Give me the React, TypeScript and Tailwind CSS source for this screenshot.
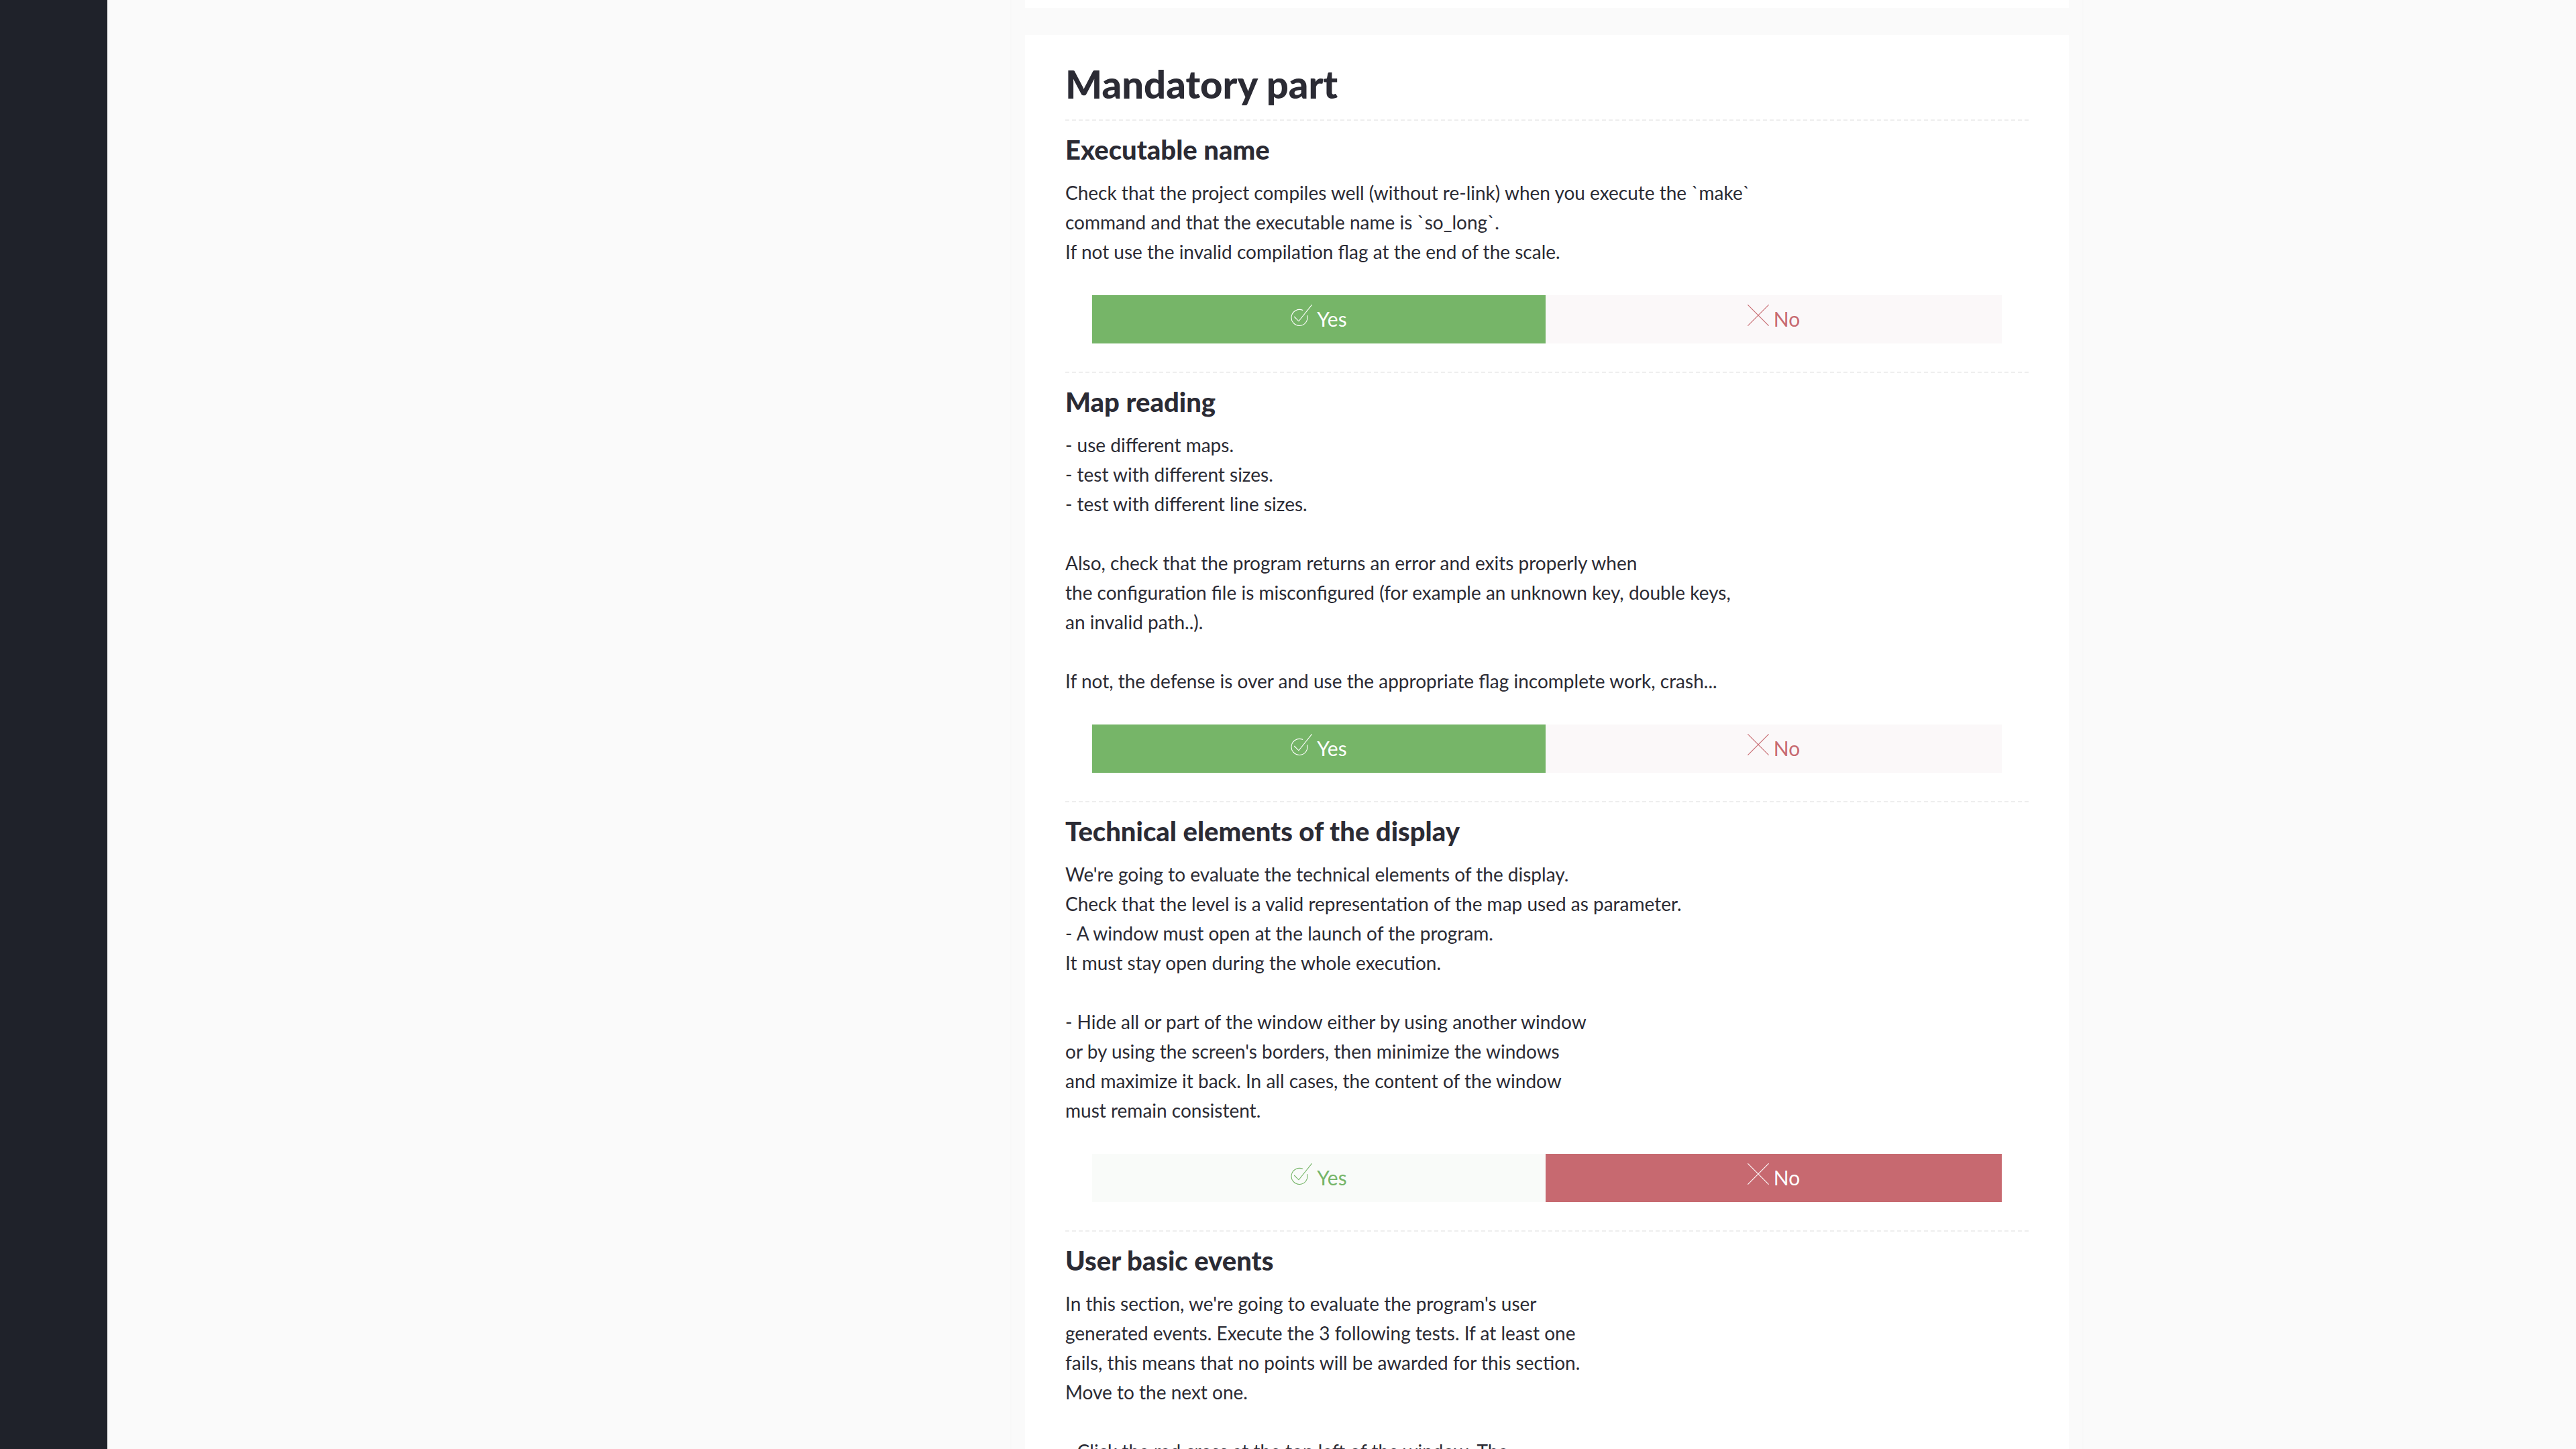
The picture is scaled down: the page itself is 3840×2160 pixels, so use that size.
import { useState } from "react";

type Answer = "yes" | "no";

type Question = {
  id: string;
  title: string;
  body: string;
  answer: Answer;
};

const questions: Question[] = [
  {
    id: "executable-name",
    title: "Executable name",
    body: `Check that the project compiles well (without re-link) when you execute the \`make\`
command and that the executable name is \`so_long\`.
If not use the invalid compilation flag at the end of the scale.`,
    answer: "yes",
  },
  {
    id: "map-reading",
    title: "Map reading",
    body: `- use different maps.
- test with different sizes.
- test with different line sizes.

Also, check that the program returns an error and exits properly when
the configuration file is misconfigured (for example an unknown key, double keys,
an invalid path..).

If not, the defense is over and use the appropriate flag incomplete work, crash...`,
    answer: "yes",
  },
  {
    id: "technical-elements",
    title: "Technical elements of the display",
    body: `We're going to evaluate the technical elements of the display.
Check that the level is a valid representation of the map used as parameter.
- A window must open at the launch of the program.
It must stay open during the whole execution.

- Hide all or part of the window either by using another window
or by using the screen's borders, then minimize the windows
and maximize it back. In all cases, the content of the window
must remain consistent.`,
    answer: "no",
  },
  {
    id: "user-basic-events",
    title: "User basic events",
    body: `In this section, we're going to evaluate the program's user
generated events. Execute the 3 following tests. If at least one
fails, this means that no points will be awarded for this section.
Move to the next one.

- Click the red cross at the top left of the window. The`,
    answer: "yes",
  },
];

function CheckIcon() {
  return (
    <svg viewBox="0 0 32 32" className="size-8" fill="none" stroke="currentColor" strokeWidth="1.1" aria-hidden="true">
      <path d="M18.2 8.6A12 12 0 1 0 24.6 16.2" />
      <path d="M5.2 18L12 24.8L31.6 0.4" />
    </svg>
  );
}

function CrossIcon() {
  return (
    <svg viewBox="0 0 32 32" className="size-8" fill="none" stroke="currentColor" strokeWidth="1.1" aria-hidden="true">
      <path d="M0.4 0.4L31.6 31.6M31.6 0.4L0.4 31.6" />
    </svg>
  );
}

function AnswerButtons({ initial }: { initial: Answer }) {
  const [answer, setAnswer] = useState<Answer>(initial);
  const base = "flex h-[72px] items-start justify-center gap-[7px] pt-[14px] text-[30px] leading-9 cursor-pointer";
  return (
    <div className="mx-10 grid grid-cols-[676fr_680fr]">
      <button
        type="button"
        aria-pressed={answer === "yes"}
        onClick={() => setAnswer("yes")}
        className={`${base} ${answer === "yes" ? "bg-[#76b568] text-white" : "bg-[#f9fbf9] text-[#76b568]"}`}
      >
        <CheckIcon />
        <span className="pt-[3px]">Yes</span>
      </button>
      <button
        type="button"
        aria-pressed={answer === "no"}
        onClick={() => setAnswer("no")}
        className={`${base} ${answer === "no" ? "bg-[#c76970] text-white" : "bg-[#fbf8f9] text-[#c76970]"}`}
      >
        <CrossIcon />
        <span className="pt-[3px]">No</span>
      </button>
    </div>
  );
}

function QuestionSection({ question }: { question: Question }) {
  return (
    <section className="border-t-2 border-dashed border-[#eeeeee] pt-[19px] pb-[42px]">
      <h3 className="mb-[18px] text-[40px] leading-[48px] font-black">{question.title}</h3>
      <p className="mb-[43px] text-[28px] leading-[44px] whitespace-pre-line">{question.body}</p>
      <AnswerButtons initial={question.answer} />
    </section>
  );
}

export default function App() {
  return (
    <div className="flex h-screen overflow-hidden bg-[#fafafa] font-['Lato',sans-serif] text-[#2b2b34]">
      <aside className="w-40 shrink-0 bg-[#1f222a]" />
      <main className="min-w-0 flex-1 pl-[612px]">
        <div className="mx-auto w-full max-w-[1600px] border-x-2 border-[#f8f8f8] px-5">
          <div className="h-3 bg-white" />
          <article className="mt-10 bg-white px-[60px] pt-[38px]">
            <h2 className="mb-[18px] text-[58px] leading-[70px] font-black">Mandatory part</h2>
            {questions.map((q) => (
              <QuestionSection key={q.id} question={q} />
            ))}
          </article>
        </div>
      </main>
    </div>
  );
}
